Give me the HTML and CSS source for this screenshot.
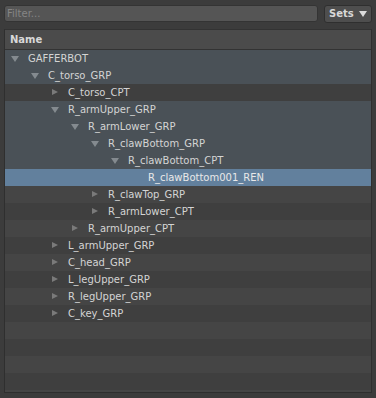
FILE: index.html
```html
<!DOCTYPE html>
<html>
<head>
<meta charset="utf-8">
<link rel="stylesheet" href="styles.css">
</head>
<body>
<div class="app">
  <div class="toolbar">
    <div class="filter">Filter...</div>
    <div class="sets">Sets <span class="caret"></span></div>
  </div>
  <div class="panel">
    <div class="header">Name</div>
    <div class="rows">
      <div class="row path l0"><span class="tw open"></span>GAFFERBOT</div>
      <div class="row path l1"><span class="tw open"></span>C_torso_GRP</div>
      <div class="row alt l2"><span class="tw closed"></span>C_torso_CPT</div>
      <div class="row path l2"><span class="tw open"></span>R_armUpper_GRP</div>
      <div class="row path l3"><span class="tw open"></span>R_armLower_GRP</div>
      <div class="row path l4"><span class="tw open"></span>R_clawBottom_GRP</div>
      <div class="row path l5"><span class="tw open"></span>R_clawBottom_CPT</div>
      <div class="row sel l6"><span class="tw"></span>R_clawBottom001_REN</div>
      <div class="row l4"><span class="tw closed"></span>R_clawTop_GRP</div>
      <div class="row alt l4"><span class="tw closed"></span>R_armLower_CPT</div>
      <div class="row l3"><span class="tw closed"></span>R_armUpper_CPT</div>
      <div class="row alt l2"><span class="tw closed"></span>L_armUpper_GRP</div>
      <div class="row l2"><span class="tw closed"></span>C_head_GRP</div>
      <div class="row alt l2"><span class="tw closed"></span>L_legUpper_GRP</div>
      <div class="row l2"><span class="tw closed"></span>R_legUpper_GRP</div>
      <div class="row alt l2"><span class="tw closed"></span>C_key_GRP</div>
      <div class="row"></div>
      <div class="row alt"></div>
      <div class="row"></div>
      <div class="row alt"></div>
      <div class="row"></div>
    </div>
  </div>
</div>
</body>
</html>
```

FILE: styles.css
```css
html, body {
  margin: 0;
  padding: 0;
  background: #3c3c3c;
  width: 376px;
  height: 398px;
  overflow: hidden;
}
.app {
  font-family: "DejaVu Sans", sans-serif;
  font-size: 10px;
  color: #d6d6d6;
  padding: 5px 4px 0 4px;
}
.toolbar {
  display: flex;
  gap: 6px;
  height: 18px;
}
.filter {
  flex: 1;
  background: #555555;
  border: 1px solid #343434;
  border-radius: 3px;
  color: #858585;
  line-height: 16px;
  padding-left: 2px;
  box-sizing: border-box;
  height: 17px;
}
.sets {
  width: 48px;
  box-sizing: border-box;
  background: #4e4e4e;
  border: 1px solid #2f2f2f;
  border-radius: 3px;
  font-weight: bold;
  color: #d8d8d8;
  line-height: 16px;
  padding-left: 4px;
  display: flex;
  align-items: center;
  gap: 5px;
}
.caret {
  width: 0;
  height: 0;
  border-left: 4px solid transparent;
  border-right: 4px solid transparent;
  border-top: 6px solid #dcdcdc;
}
.panel {
  margin-top: 6px;
  border: 1px solid #2f2f2f;
  border-top-color: #333;
  height: 364px;
  box-sizing: border-box;
  background: #414141;
  overflow: hidden;
  width: 368px;
}
.header {
  height: 19px;
  line-height: 19px;
  background: #4b4b4b;
  border-bottom: 1px solid #333;
  font-weight: bold;
  padding-left: 5px;
  color: #d8d8d8;
}
.row {
  height: 17px;
  line-height: 17px;
  background: #454545;
  display: flex;
  align-items: center;
  color: #d4d4d4;
  white-space: nowrap;
}
.row.alt { background: #3f3f3f; }
.row.path { background: #4a5157; }
.row.sel { background: #62809d; color: #e8e8e8; }
.tw {
  width: 17px;
  height: 17px;
  flex: none;
  position: relative;
}
.tw.open::before {
  content: "";
  position: absolute;
  left: 0;
  top: 6px;
  border-left: 4px solid transparent;
  border-right: 4px solid transparent;
  border-top: 6px solid #848a8f;
}
.tw.closed::before {
  content: "";
  position: absolute;
  left: 1px;
  top: 5px;
  border-top: 3.5px solid transparent;
  border-bottom: 3.5px solid transparent;
  border-left: 6px solid #7a7a7a;
}
.l0 { padding-left: 6px; }
.l1 { padding-left: 26px; }
.l2 { padding-left: 46px; }
.l3 { padding-left: 66px; }
.l4 { padding-left: 86px; }
.l5 { padding-left: 106px; }
.l6 { padding-left: 126px; }
```
